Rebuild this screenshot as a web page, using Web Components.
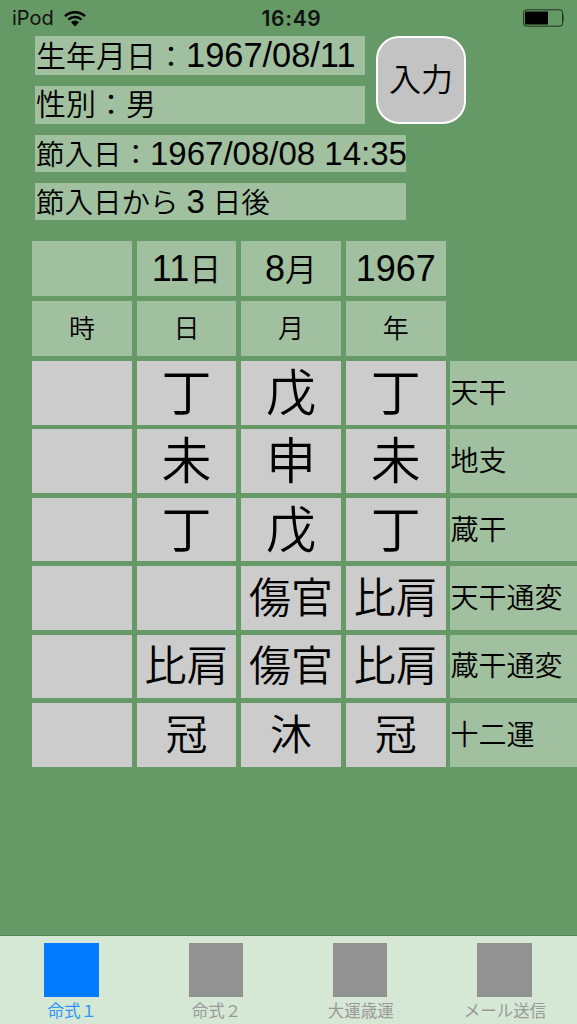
<!DOCTYPE html>
<html lang="ja">
<head>
<meta charset="utf-8">
<title>命式</title>
<style>
  html, body { margin: 0; height: 100%; }
  body { background: #659965; font-family: "Liberation Sans", "Noto Sans CJK JP", sans-serif; font-weight: 350; color: #000; }
</style>
</head>
<body>
<app-screen>
  <status-bar carrier="iPod" time="16:49"></status-bar>
  <birth-form></birth-form>
  <meishiki-chart></meishiki-chart>
  <tab-bar slot="tabs">
    <tab-item active>命式１</tab-item>
    <tab-item>命式２</tab-item>
    <tab-item>大運歳運</tab-item>
    <tab-item>メール送信</tab-item>
  </tab-bar>
</app-screen>

<script>
// pantalla completa: contenido arriba, tab bar abajo
class AppScreen extends HTMLElement {
  constructor () {
    super();
    this.attachShadow({ mode: 'open' });
    this.shadowRoot.innerHTML = `
      <style>
        :host { display: flex; flex-direction: column; height: 1024px; overflow: hidden; }
        main { flex: 1; }
      </style>
      <main><slot></slot></main>
      <slot name="tabs"></slot>
    `;
  }
}

class StatusBar extends HTMLElement {
  constructor () {
    super();
    this.attachShadow({ mode: 'open' });
  }

  connectedCallback () {
    const carrier = this.getAttribute('carrier') ?? '';
    const time = this.getAttribute('time') ?? '';
    this.shadowRoot.innerHTML = `
      <style>
        :host { display: grid; grid-template-columns: 1fr auto 1fr; align-items: center; height: 36px; padding: 0 13px 0 12px; font-family: Inter, sans-serif; font-weight: 400; font-size: 20px; color: #111; }
        .left { display: flex; align-items: center; gap: 10px; }
        .time { font-weight: 600; font-size: 21px; letter-spacing: 0.7px; padding-left: 7px; }
        .right { display: flex; justify-content: flex-end; }
        svg { display: block; }
      </style>
      <div class="left">
        <span>${carrier}</span>
        <svg width="22" height="17" viewBox="0 0 22 17">
          <path d="M1 6.2A14.5 14.5 0 0 1 21 6.2M4.4 9.6A9.6 9.6 0 0 1 17.6 9.6" fill="none" stroke="#000" stroke-width="2.4"/>
          <path d="M7 12.2A5.8 5.8 0 0 1 15 12.2L11 16.4Z" fill="#000"/>
        </svg>
      </div>
      <div class="time">${time}</div>
      <div class="right">
        <svg width="41" height="18" viewBox="0 0 41 18">
          <rect x="0.6" y="0.8" width="39" height="16.4" rx="2.6" fill="none" stroke="#1c331c" stroke-width="1"/>
          <rect x="2" y="2.5" width="23" height="13" fill="#000"/>
          <path d="M40.6 6a3 3 0 0 1 0 6Z" fill="#000"/>
        </svg>
      </div>
    `;
  }
}

// los números van más grandes que los kanji, como en la captura
// (sin espacios en el shadow: es inline y se verían en el texto)
class NumText extends HTMLElement {
  constructor () {
    super();
    this.attachShadow({ mode: 'open' });
    this.shadowRoot.innerHTML = '<style>:host { display: inline; font-family: "Liberation Sans", sans-serif; font-weight: 400; font-size: var(--num-size, 34.4px); }</style><slot></slot>';
  }
}

class InfoField extends HTMLElement {
  constructor () {
    super();
    this.attachShadow({ mode: 'open' });
    this.shadowRoot.innerHTML = `
      <style>
        :host { display: flex; align-items: center; box-sizing: border-box; background: #a0c0a0; padding-left: 1px; font-size: 30px; line-height: 1; white-space: nowrap; }
        :host([small]) { font-size: 28.5px; --num-size: 33px; }
        .row { display: block; }
      </style>
      <div class="row"><slot></slot></div>
    `;
  }
}

class RoundButton extends HTMLElement {
  constructor () {
    super();
    this.attachShadow({ mode: 'open' });
    this.shadowRoot.innerHTML = `
      <style>
        :host { display: flex; align-items: center; justify-content: center; box-sizing: border-box; background: #c3c3c3; border: 2px solid #fff; border-radius: 23px; padding-bottom: 6px; font-size: 32px; }
      </style>
      <slot></slot>
    `;
  }
}

// cabecera con los datos de nacimiento y el botón
class BirthForm extends HTMLElement {
  constructor () {
    super();
    this.attachShadow({ mode: 'open' });
    this.shadowRoot.innerHTML = `
      <style>
        :host { display: grid; grid-template-columns: 330px 41px 60px; grid-template-rows: 39px 38px 37px 37px; row-gap: 11px; margin-left: 35px; }
        round-button { grid-column: 2 / 4; grid-row: 1 / 3; margin-left: 11px; }
        .wide { grid-column: 1 / 3; }
      </style>
      <info-field>生年月日：<num-text>1967/08/11</num-text></info-field>
      <round-button>入力</round-button>
      <info-field>性別：男</info-field>
      <info-field class="wide" small>節入日：<num-text>1967/08/08 14:35</num-text></info-field>
      <info-field class="wide" small>節入日から <num-text>3</num-text> 日後</info-field>
    `;
  }
}

class ChartCell extends HTMLElement {
  constructor () {
    super();
    this.attachShadow({ mode: 'open' });
    this.shadowRoot.innerHTML = `
      <style>
        :host { display: flex; align-items: center; justify-content: center; min-width: 0; padding-top: 2px; box-sizing: border-box; background: #cccccc; line-height: 1; white-space: nowrap; }
        :host([kind="head"]) { background: #a0c0a0; padding-top: 0; }
        :host([kind="label"]) { background: #a0c0a0; justify-content: flex-start; padding-left: 0; font-size: 28px; }
        .row { display: block; }
      </style>
      <div class="row"><slot></slot></div>
    `;
  }
}

const CHART_ROWS = [
  { label: '天干', size: 50, cells: ['', '丁', '戊', '丁'] },
  { label: '地支', size: 50, cells: ['', '未', '申', '未'] },
  { label: '蔵干', size: 50, cells: ['', '丁', '戊', '丁'] },
  { label: '天干通変', size: 42, cells: ['', '', '傷官', '比肩'] },
  { label: '蔵干通変', size: 42, cells: ['', '比肩', '傷官', '比肩'] },
  { label: '十二運', size: 42, cells: ['', '冠', '沐', '冠'] }
];

class MeishikiChart extends HTMLElement {
  constructor () {
    super();
    this.attachShadow({ mode: 'open' });
  }

  connectedCallback () {
    const head = (text, size) => `<chart-cell kind="head" style="font-size:${size}px">${text}</chart-cell>`;
    const dates = ['', '<num-text>11</num-text>日', '<num-text>8</num-text>月', '<num-text>1967</num-text>']
      .map(t => head(t, 32)).join('');
    const pillars = ['時', '日', '月', '年'].map(t => head(t, 26)).join('');
    const rows = CHART_ROWS.map(row => row.cells
      .map(t => `<chart-cell style="font-size:${row.size}px">${t}</chart-cell>`)
      .join('') + `<chart-cell kind="label">${row.label}</chart-cell>`).join('');

    this.shadowRoot.innerHTML = `
      <style>
        :host { display: grid; grid-template-columns: repeat(4, 99.8px) 1fr; grid-template-rows: repeat(2, 55.2px) repeat(6, 63.6px); gap: 4.8px; margin: 21px 0 0 32px; --num-size: 36px; }
        .spacer { display: block; }
      </style>
      ${dates}<span class="spacer"></span>
      ${pillars}<span class="spacer"></span>
      ${rows}
    `;
  }
}

class TabBar extends HTMLElement {
  constructor () {
    super();
    this.attachShadow({ mode: 'open' });
    this.shadowRoot.innerHTML = `
      <style>
        :host { display: grid; grid-template-columns: repeat(4, 1fr); box-sizing: border-box; height: 89px; background: #d5e7d5; border-top: 1px solid #54805a; }
      </style>
      <slot></slot>
    `;
  }
}

class TabItem extends HTMLElement {
  constructor () {
    super();
    this.attachShadow({ mode: 'open' });
    this.shadowRoot.innerHTML = `
      <style>
        :host { display: flex; flex-direction: column; align-items: center; padding-top: 7px; font-size: 16.5px; font-weight: 400; line-height: 1; color: #999999; white-space: nowrap; }
        .icon { width: 54.5px; height: 54px; margin-bottom: 6px; margin-left: -1px; background: #929292; }
        :host([active]) { color: #2f95f5; }
        :host([active]) .icon { background: #007aff; }
      </style>
      <div class="icon"></div>
      <slot></slot>
    `;
  }
}

customElements.define('app-screen', AppScreen);
customElements.define('status-bar', StatusBar);
customElements.define('num-text', NumText);
customElements.define('info-field', InfoField);
customElements.define('round-button', RoundButton);
customElements.define('birth-form', BirthForm);
customElements.define('chart-cell', ChartCell);
customElements.define('meishiki-chart', MeishikiChart);
customElements.define('tab-bar', TabBar);
customElements.define('tab-item', TabItem);
</script>
</body>
</html>
